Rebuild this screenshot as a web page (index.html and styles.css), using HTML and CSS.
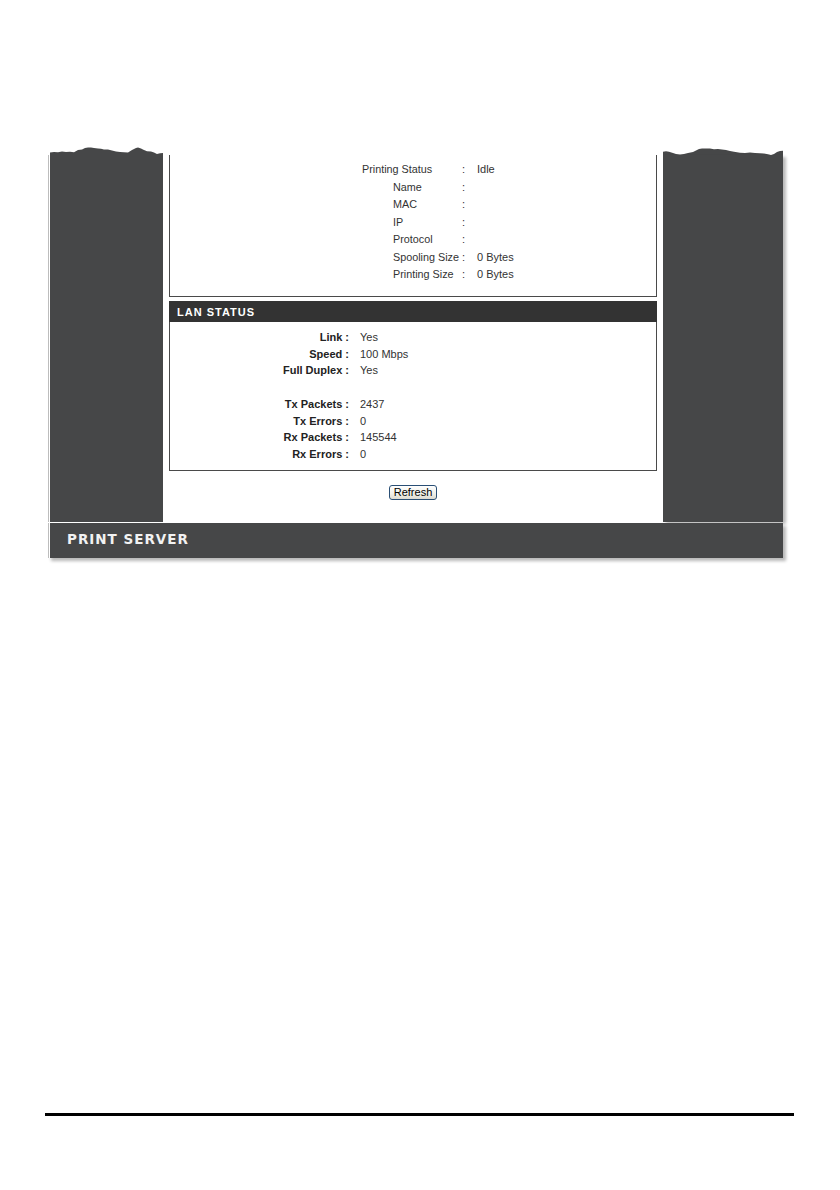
FILE: index.html
```html
<!DOCTYPE html>
<html>
<head>
<meta charset="utf-8">
<link rel="stylesheet" href="styles.css">
</head>
<body>
<div class="page">
  <div class="frame">
    <div class="main">
      <div class="side side-left">
        <svg class="torn" width="113" height="9" viewBox="0 0 113 9" preserveAspectRatio="none">
          <polygon fill="#464748" points="0,6.5 4,6 8,6.2 12,5.6 16,6 20,5.8 24,6.2 28,4 32,3.6 35,2 38,1.4 41,1.6 44,2 48,2.4 51,2.8 54,3.4 58,3.6 62,4.6 66,5.4 70,6 74,6.2 78,6.4 82,4 86,2 88,1.6 91,2.4 94,4 97,5.2 101,5.4 104,6.6 107,8 110,7.2 113,7 113,9 0,9"/>
        </svg>
        <div class="fill"></div>
      </div>
      <div class="content">
        <div class="box box-top">
          <div class="kv">
            <span class="k">Printing Status</span><span class="c">:</span><span class="v">Idle</span>
            <span class="k sub">Name</span><span class="c">:</span><span class="v"></span>
            <span class="k sub">MAC</span><span class="c">:</span><span class="v"></span>
            <span class="k sub">IP</span><span class="c">:</span><span class="v"></span>
            <span class="k sub">Protocol</span><span class="c">:</span><span class="v"></span>
            <span class="k sub">Spooling Size</span><span class="c">:</span><span class="v">0 Bytes</span>
            <span class="k sub">Printing Size</span><span class="c">:</span><span class="v">0 Bytes</span>
          </div>
        </div>
        <div class="section">
          <div class="section-head">LAN STATUS</div>
          <div class="box box-lan">
            <div class="lan">
              <span class="lk">Link :</span><span class="lv">Yes</span>
              <span class="lk">Speed :</span><span class="lv">100 Mbps</span>
              <span class="lk">Full Duplex :</span><span class="lv">Yes</span>
              <span class="lk"></span><span class="lv"></span>
              <span class="lk">Tx Packets :</span><span class="lv">2437</span>
              <span class="lk">Tx Errors :</span><span class="lv">0</span>
              <span class="lk">Rx Packets :</span><span class="lv">145544</span>
              <span class="lk">Rx Errors :</span><span class="lv">0</span>
            </div>
          </div>
        </div>
        <div class="actions">
          <button class="btn" type="button">Refresh</button>
        </div>
      </div>
      <div class="side side-right">
        <svg class="torn" width="120" height="9" viewBox="0 0 120 9" preserveAspectRatio="none">
          <polygon fill="#464748" points="0,5.8 3,5.2 6,5.8 10,7 13,8 17,8.6 21,8 25,7 30,6 33,4.4 36,3 39,2.4 43,2.6 47,2.4 51,3.2 55,3 59,3.6 63,4 67,5 71,5.8 77,6.8 82,7 87,6.6 92,7 97,7.2 101,7.6 105,8.2 108,9 111,8 114,6 117,5 120,4.8 120,9 0,9"/>
        </svg>
        <div class="fill"></div>
      </div>
    </div>
    <div class="footer">
      <span class="brand">PRINT SERVER</span>
    </div>
  </div>
  <div class="rule"></div>
</div>
</body>
</html>
```

FILE: styles.css
```css
html, body {
  margin: 0;
  padding: 0;
  background: #ffffff;
}

body {
  font-family: "Liberation Sans", Arial, sans-serif;
  font-size: 11px;
  color: #222222;
}

.page {
  padding-top: 146px;
  width: 840px;
  height: 1190px;
  box-sizing: border-box;
}

.frame {
  margin-left: 48px;
  width: 735px;
  display: flex;
  flex-direction: column;
}

.main {
  display: flex;
  height: 376px;
}

.side {
  display: flex;
  flex-direction: column;
}

.side-left {
  width: 115px;
}

.side-left .torn {
  margin-left: 2px;
  display: block;
}

.side-left .fill {
  flex: 1;
  background: linear-gradient(to right, #bdbdbd 0 1px, #ffffff 1px 2px, #464748 2px);
}

.side-right {
  width: 120px;
}

.side-right .torn {
  display: block;
}

.side-right .fill {
  flex: 1;
  background: #464748;
  box-shadow: 3px 2px 3px rgba(0, 0, 0, 0.28);
}

.content {
  width: 488px;
  padding: 9px 6px 0 6px;
  background: #ffffff;
  display: flex;
  flex-direction: column;
}

.box {
  border: 1px solid #4a4a4a;
  border-top: none;
}

.box-top {
  padding: 6px 0 12px 0;
}

.kv {
  display: grid;
  grid-template-columns: 100px 15px 1fr;
  padding-left: 192px;
  line-height: 17.5px;
  color: #333333;
}

.k {
  font-size: 10.8px;
}

.k.sub {
  padding-left: 31px;
}

.section {
  margin-top: 4px;
}

.section-head {
  height: 21px;
  line-height: 22px;
  background: #333333;
  color: #ffffff;
  font-weight: bold;
  font-size: 11px;
  letter-spacing: 1px;
  padding-left: 8px;
}

.box-lan {
  padding: 7.5px 0 7.5px 0;
}

.lan {
  display: grid;
  grid-template-columns: 179px 1fr;
  column-gap: 11px;
  line-height: 16.7px;
}

.lan .lk {
  text-align: right;
  font-weight: bold;
  color: #222222;
  min-height: 16.7px;
}

.lan .lv {
  color: #333333;
}

.actions {
  display: flex;
  justify-content: center;
  margin-top: 14px;
}

.btn {
  width: 48px;
  height: 15px;
  padding: 0;
  font-family: "Liberation Sans", Arial, sans-serif;
  font-size: 11px;
  line-height: 13px;
  color: #000000;
  border: 1px solid #2a4f75;
  border-radius: 3px;
  background: linear-gradient(#ffffff, #f0efe8 60%, #dcdad0);
}

.footer {
  margin-top: 1px;
  height: 35px;
  background: linear-gradient(to right, #bdbdbd 0 1px, #ffffff 1px 2px, #464748 2px);
  box-shadow: 3px 3px 3px rgba(0, 0, 0, 0.28);
  display: flex;
  align-items: center;
  padding-left: 19px;
  padding-bottom: 4px;
  box-sizing: border-box;
}

.brand {
  font-family: "DejaVu Sans", Verdana, sans-serif;
  font-weight: bold;
  font-size: 13.5px;
  letter-spacing: 1px;
  color: #f2f2f2;
}

.rule {
  margin: 555px 0 0 45px;
  width: 749px;
  height: 3px;
  background: #000000;
}
```
